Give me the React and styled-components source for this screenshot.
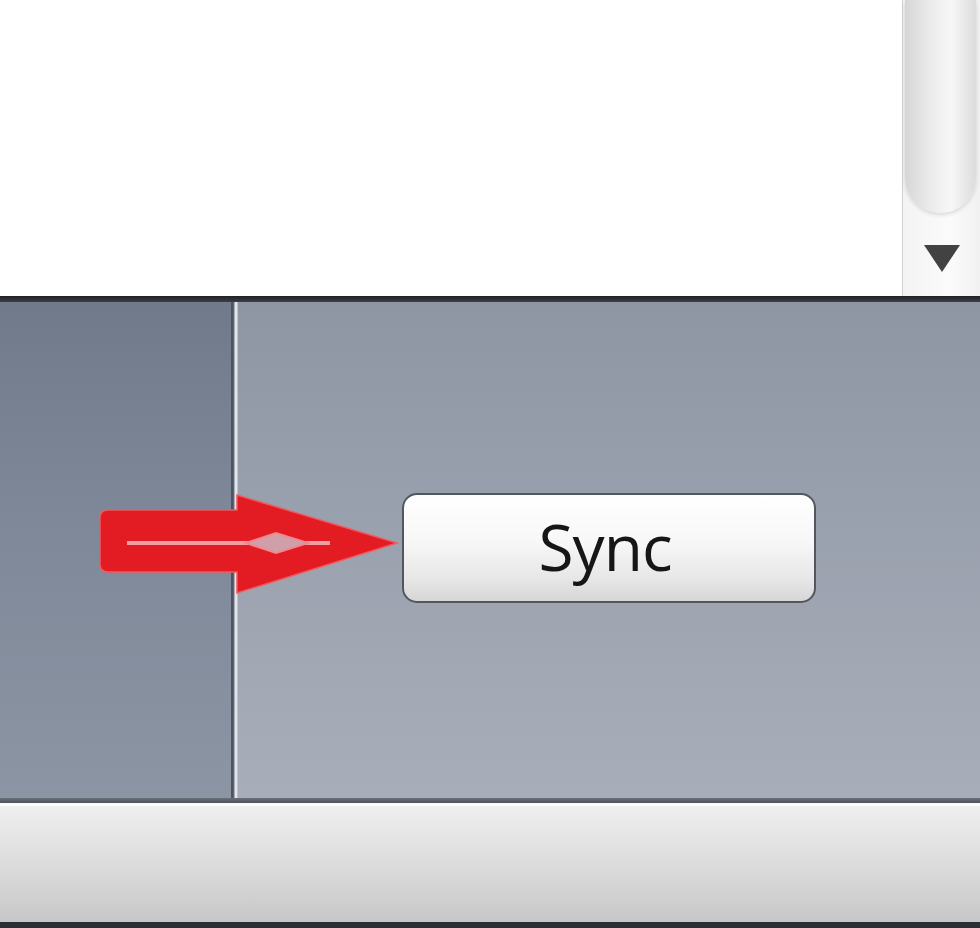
import styled, { createGlobalStyle } from 'styled-components'

const Global = createGlobalStyle`
    html, body {
        margin: 0;
        padding: 0;
        overflow: hidden;
        background: #ffffff;
    }
`;

const Frame = styled.div`
    position: relative;
    width: 980px;
    height: 928px;
    display: flex;
    flex-direction: column;
    font-family: "Open Sans", "Liberation Sans", Arial, sans-serif;
`;

const ListArea = styled.div`
    height: 296px;
    display: flex;
    background: #ffffff;
`;

const ListBody = styled.div`
    flex: 1;
`;

const Scrollbar = styled.div`
    width: 77px;
    display: flex;
    flex-direction: column;
    border-left: 1px solid #d2d2d2;
    background: linear-gradient(90deg, #f3f3f3, #fbfbfb 60%, #f1f1f1);
`;

const Thumb = styled.div`
    height: 213px;
    margin: 0 4px 0 2px;
    border-radius: 0 0 36px 36px;
    background: linear-gradient(90deg, #d6d6d6, #ebebeb 35%, #f7f7f7 65%, #dcdcdc);
    box-shadow: 0 2px 4px rgba(0, 0, 0, 0.14);
`;

const ArrowButton = styled.div`
    flex: 1;
    display: flex;
    align-items: center;
    justify-content: center;
    padding-top: 8px;
`;

const Triangle = styled.div`
    width: 0;
    height: 0;
    border-left: 18px solid transparent;
    border-right: 18px solid transparent;
    border-top: 27px solid #424242;
`;

const Rule = styled.div`
    height: ${(props) => props.h}px;
    background: ${(props) => props.bg};
`;

const Panels = styled.div`
    height: 496px;
    display: flex;
`;

const SidePane = styled.div`
    width: 231px;
    background: linear-gradient(180deg, #717a8a 0%, #7e8797 40%, #8c95a4 100%);
`;

const Divider = styled.div`
    width: 7px;
    background: linear-gradient(90deg, #4d5361 0, #4d5361 2px, #6e7584 3px, #e2e5ea 4px, #e2e5ea 6px, #9aa1ad 7px);
`;

const MainPane = styled.div`
    flex: 1;
    display: flex;
    align-items: center;
    justify-content: center;
    padding-bottom: 4px;
    background: linear-gradient(180deg, #8e96a3 0%, #99a0ad 40%, #a8aeb9 100%);
`;

const SyncButton = styled.button`
    width: 414px;
    height: 110px;
    border: 2px solid #52575e;
    border-radius: 15px;
    background: linear-gradient(180deg, #ffffff 0%, #f7f7f7 45%, #e6e6e6 80%, #d6d6d6 100%);
    box-shadow: inset 0 1px 0 #ffffff;
    font-family: "Open Sans", "Liberation Sans", Arial, sans-serif;
    font-size: 64px;
    letter-spacing: -1px;
    color: #161616;
    padding: 0 8px 4px 0;
    cursor: pointer;
`;

const BottomBar = styled.div`
    height: 119px;
    border-top: 3px solid #fbfbfb;
    box-sizing: border-box;
    background: linear-gradient(180deg, #efefef 0%, #e2e2e2 35%, #d0d0d0 80%, #c6c6c6 100%);
`;

const ArrowMark = styled.svg`
    position: absolute;
    left: 96px;
    top: 490px;
`;

const RedArrow = () => (
    <ArrowMark width="305" height="108" viewBox="0 0 305 108">
        <path
            d="M12 20 H141 V5 L301 53 L141 103 V82 H12 Q4 82 4 74 V28 Q4 20 12 20 Z"
            fill="#e31c24"
            stroke="#f05a60"
            strokeWidth="1.5"
        />
        <line x1="31" y1="53" x2="234" y2="53" stroke="#f09ea2" strokeWidth="4" />
        <polygon points="150,53 180,43 212,53 180,63" fill="#cfa0aa" stroke="#f08890" strokeWidth="2" />
    </ArrowMark>
);

export default function App() {
    return (
        <>
            <Global />
            <Frame>
                <ListArea>
                    <ListBody />
                    <Scrollbar>
                        <Thumb />
                        <ArrowButton>
                            <Triangle />
                        </ArrowButton>
                    </Scrollbar>
                </ListArea>
                <Rule h={6} bg="linear-gradient(180deg, #1f2125, #3a3e46)" />
                <Panels>
                    <SidePane />
                    <Divider />
                    <MainPane>
                        <SyncButton>Sync</SyncButton>
                    </MainPane>
                </Panels>
                <Rule h={5} bg="linear-gradient(180deg, #6a6f78, #4e525a)" />
                <BottomBar />
                <Rule h={6} bg="#2b2e35" />
                <RedArrow />
            </Frame>
        </>
    )
}
